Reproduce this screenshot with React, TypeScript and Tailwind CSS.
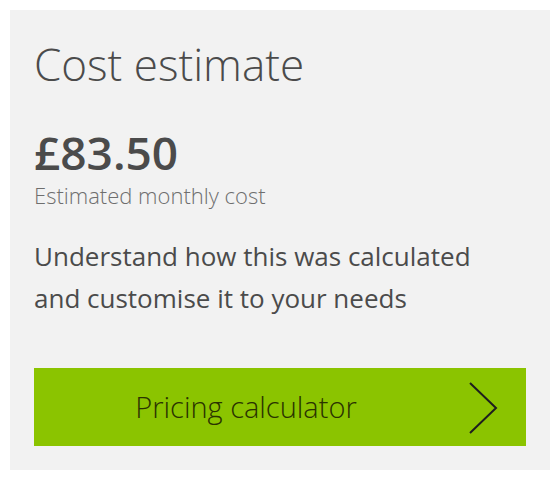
export default function App() {
  return (
    <div className="w-[555px] h-[478px] bg-white p-[10px]">
      <div
        className="w-[540px] h-[460px] bg-[#f2f2f2] p-6 flex flex-col"
        style={{ fontFamily: '"Open Sans", "Noto Sans", sans-serif' }}
      >
        <h2 className="text-[44px] leading-[56px] font-light text-[#4b4b4b] mt-[2px]">
          Cost estimate
        </h2>
        <div className="mt-[30px] text-[46px] leading-[60px] font-semibold text-[#4b4b4b]">
          £83.50
        </div>
        <div className="-mt-[2px] text-[22px] leading-[30px] font-light text-[#6e6e6e]">
          Estimated monthly cost
        </div>
        <p className="mt-[25px] text-[26px] leading-[42px] text-[#4b4b4b]">
          Understand how this was calculated
          <br />
          and customise it to your needs
        </p>
        <button className="mt-auto h-[78px] w-full bg-[#8bc400] flex items-center">
          <span className="flex-1 text-center text-[29px] font-light text-[#2a3300]">
            Pricing calculator
          </span>
          <svg width="68" height="78" viewBox="0 0 68 78" className="shrink-0">
            <polyline
              points="12,15 38,40 12,65"
              fill="none"
              stroke="#1e1e1e"
              strokeWidth="2"
            />
          </svg>
        </button>
      </div>
    </div>
  );
}
